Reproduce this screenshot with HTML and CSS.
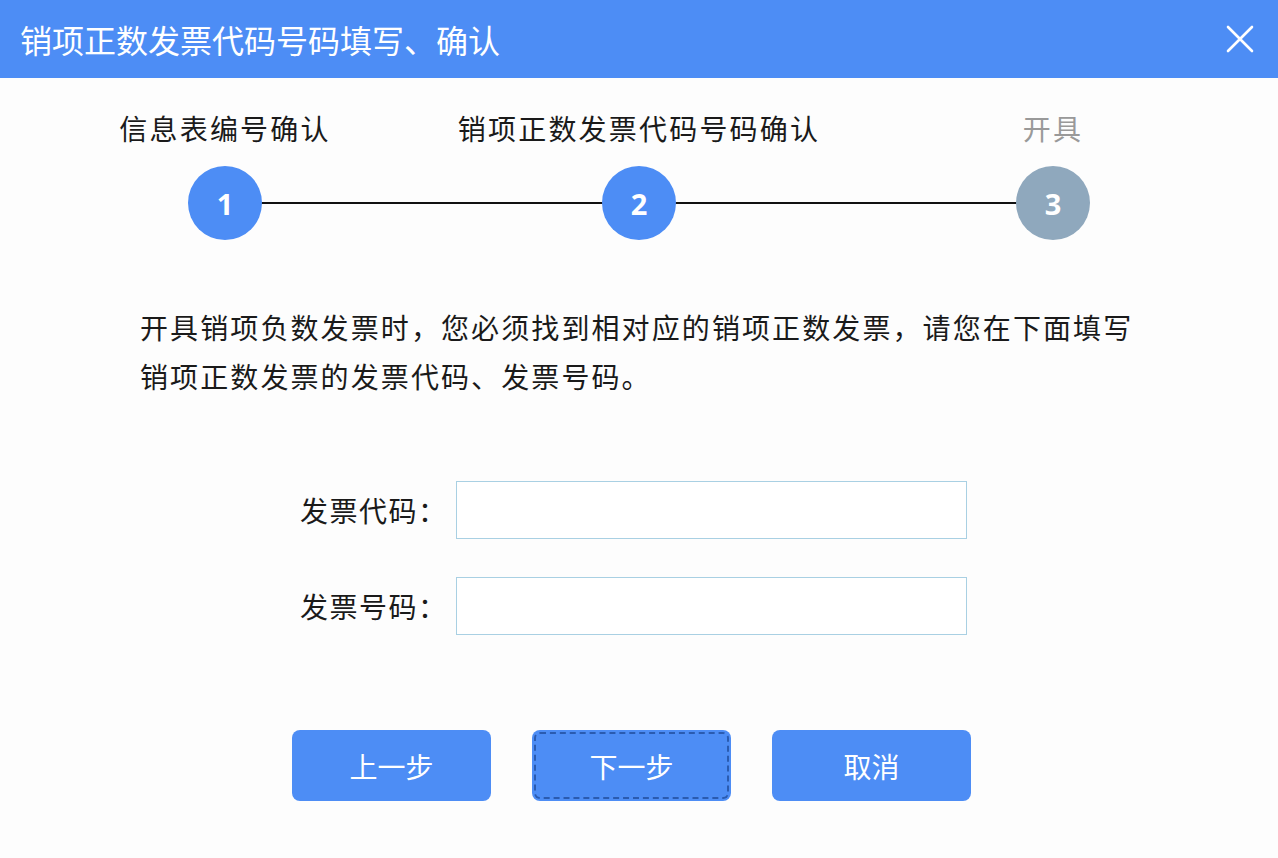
FILE: index.html
```html
<!DOCTYPE html>
<html lang="zh-CN">
<head>
  <meta charset="UTF-8">
  <title>销项正数发票代码号码填写、确认</title>
  <link rel="stylesheet" href="styles.css">
</head>
<body>

  <!-- 标题栏 -->
  <div class="dialog-header">
    <div class="dialog-title">销项正数发票代码号码填写、确认</div>
    <span class="close-btn">
      <svg width="28" height="28" viewBox="0 0 28 28">
        <path d="M2 2 L26 26 M26 2 L2 26" stroke="#fff" stroke-width="2.6" stroke-linecap="round" fill="none"/>
      </svg>
    </span>
  </div>

  <!-- 步骤条 -->
  <div class="steps">
    <div class="steps-line"></div>
    <div class="step done">
      <div class="step-label">信息表编号确认</div>
      <div class="step-num">1</div>
    </div>
    <div class="step done">
      <div class="step-label">销项正数发票代码号码确认</div>
      <div class="step-num">2</div>
    </div>
    <div class="step todo">
      <div class="step-label">开具</div>
      <div class="step-num">3</div>
    </div>
  </div>

  <!-- 提示 -->
  <p class="tip">开具销项负数发票时，您必须找到相对应的销项正数发票，请您在下面填写销项正数发票的发票代码、发票号码。</p>

  <!-- 表单 -->
  <div class="form">
    <label class="form-label">发票代码：</label>
    <input type="text" class="form-input">
    <label class="form-label">发票号码：</label>
    <input type="text" class="form-input">
  </div>

  <!-- 按钮 -->
  <div class="actions">
    <button class="btn">上一步</button>
    <button class="btn focused">下一步</button>
    <button class="btn">取消</button>
  </div>

</body>
</html>
```

FILE: styles.css
```css
body {
  margin: 0;
  padding: 0;
  background-color: #fdfdfd;
  color: #1a1a1a;
  font-family: "Noto Sans CJK SC", "Noto Sans", sans-serif;
}
/* 标题栏 */
.dialog-header {
  height: 78px;
  background-color: #4d8df5;
  display: flex;
  align-items: center;
  justify-content: space-between;
  padding: 0 24px 0 20px;
}
.dialog-title {
  color: #fff;
  font-size: 32px;
  line-height: 40px;
}
.close-btn {
  display: flex;
  align-items: center;
}
/* 步骤条 */
.steps {
  position: relative;
  width: 1242px;
  margin: 30px auto 0;
  display: grid;
  grid-template-columns: repeat(3, 1fr);
}
.steps-line {
  position: absolute;
  left: 207px;
  right: 207px;
  top: 94px;
  height: 2px;
  background-color: #111;
}
.step {
  display: flex;
  flex-direction: column;
  align-items: center;
  position: relative;
}
.step-label {
  font-size: 28px;
  line-height: 40px;
  letter-spacing: 2.2px;
}
.todo .step-label {
  color: #999;
}
.step-num {
  width: 74px;
  height: 74px;
  margin-top: 18px;
  border-radius: 50%;
  background-color: #4d8df5;
  color: #fff;
  font-family: "Open Sans", "DejaVu Sans", sans-serif;
  font-weight: bold;
  font-size: 29px;
  display: flex;
  align-items: center;
  justify-content: center;
  position: relative;
}
.todo .step-num {
  background-color: #8fa8bd;
}
/* 提示文字 */
.tip {
  width: 1010px;
  margin: 63px 0 0 140px;
  font-size: 28px;
  line-height: 49px;
  letter-spacing: 2.1px;
}
/* 表单 */
.form {
  display: grid;
  grid-template-columns: 150px 511px;
  column-gap: 6px;
  row-gap: 38px;
  align-items: center;
  margin: 80px 0 0 300px;
}
.form-label {
  font-size: 28px;
  letter-spacing: 1.5px;
  white-space: nowrap;
}
.form-input {
  box-sizing: border-box;
  height: 58px;
  border: 1px solid #a9d0e3;
  background: #fff;
  padding: 0 10px;
  font-size: 22px;
  outline: none;
}
/* 按钮 */
.actions {
  display: flex;
  gap: 41px;
  margin: 95px 0 0 292px;
}
.btn {
  width: 199px;
  height: 71px;
  border: none;
  border-radius: 8px;
  background-color: #4d8df5;
  color: #fff;
  font-family: "Noto Sans CJK SC", sans-serif;
  font-size: 28px;
  cursor: pointer;
}
.btn.focused {
  outline: 2px dashed #2a5bb0;
  outline-offset: -4px;
}
```
